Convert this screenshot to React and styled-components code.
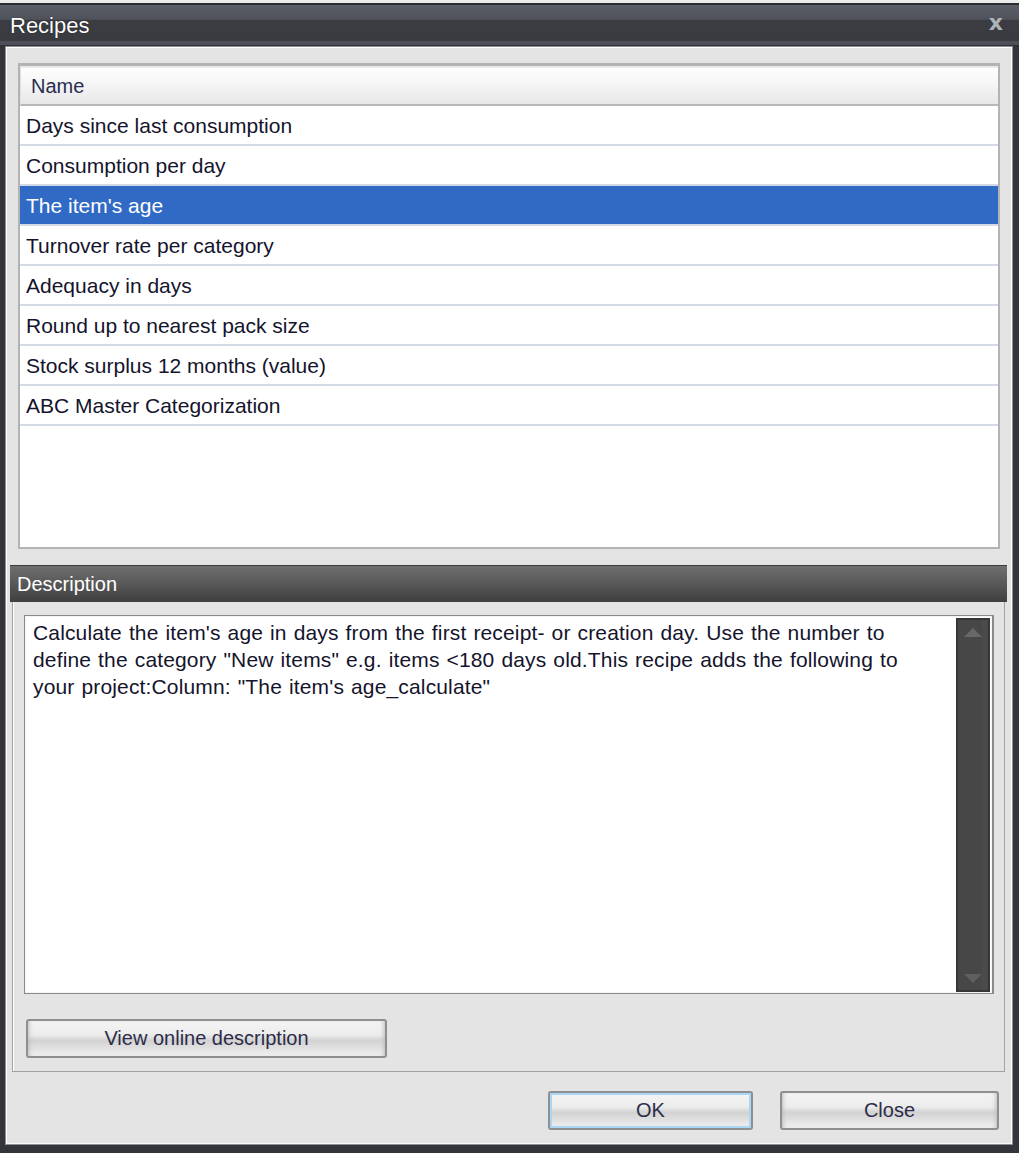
import styled, { createGlobalStyle } from 'styled-components';

const GlobalStyle = createGlobalStyle`
  html, body {
    margin: 0;
    padding: 0;
    background: #ebebeb;
  }
  body {
    font-family: "Liberation Sans", Arial, sans-serif;
  }
`;

const recipes = [
  'Days since last consumption',
  'Consumption per day',
  "The item's age",
  'Turnover rate per category',
  'Adequacy in days',
  'Round up to nearest pack size',
  'Stock surplus 12 months (value)',
  'ABC Master Categorization',
];

// the dialog wraps the description at these points
const descLines = [
  "Calculate the item's age in days from the first receipt- or creation day. Use the number to",
  'define the category "New items" e.g. items <180 days old.This recipe adds the following to',
  'your project:Column: "The item\'s age_calculate"',
];

const Window = styled.div`
  margin-top: 3px;
  width: 1019px;
  height: 1150px;
  box-sizing: border-box;
  background: #33353a;
  display: flex;
  flex-direction: column;
  padding: 0 7px 9px 6px;
`;

const TitleBar = styled.div`
  height: 44px;
  margin: 0 -7px 0 -6px;
  box-sizing: border-box;
  border-top: 2px solid #2a2b30;
  border-bottom: 2px solid #2e3034;
  background: linear-gradient(
    to bottom,
    #5b5e67 0%,
    #4f525a 36%,
    #3b3d43 37%,
    #393b41 90%,
    #4c4f57 91%,
    #4c4f57 100%
  );
  display: flex;
  align-items: center;
  justify-content: space-between;
  padding: 0 16px 0 10px;
`;

const Title = styled.span`
  color: #fff;
  font-size: 22px;
  text-shadow: 0 0 1px #000;
  margin-top: 2px;
`;

const CloseX = styled.span`
  color: #aeb3ba;
  font-size: 22px;
  font-weight: 700;
  margin-top: -6px;
  font-family: "DejaVu Sans", sans-serif;
`;

const Content = styled.div`
  flex: 1;
  background: #e4e4e4;
  box-shadow: inset 1px 1px 0 #fff, inset -1px -1px 0 #fafafa, 0 0 0 1px #8e9096;
  display: flex;
  flex-direction: column;
  padding: 16px 5px 0 4px;
`;

const ListBox = styled.div`
  height: 486px;
  box-sizing: border-box;
  margin: 0 7px 0 8px;
  border: 2px solid #b3b3b3;
  border-top-width: 3px;
  box-shadow: inset 0 2px 0 #e9e9e9;
  padding-top: 2px;
  background: #fff;
  display: flex;
  flex-direction: column;
  overflow: hidden;
`;

const Header = styled.div`
  height: 38px;
  box-sizing: border-box;
  flex-shrink: 0;
  background: linear-gradient(to bottom, #fefefe 0%, #f4f4f4 50%, #e7e7e7 100%);
  border-bottom: 2px solid #b8b8b8;
  border-left: 1px solid #e0e0e0;
  display: flex;
  align-items: center;
  padding-left: 10px;
  font-size: 20px;
  color: #2a2d50;
`;

const Row = styled.div`
  height: 40px;
  box-sizing: border-box;
  flex-shrink: 0;
  border-bottom: 2px solid #d3dae5;
  display: flex;
  align-items: center;
  padding-left: 6px;
  padding-top: 1px;
  font-size: 21px;
  background: ${(p) => (p.$selected ? '#316ac5' : '#fff')};
  color: ${(p) => (p.$selected ? '#fff' : '#14142c')};
`;

const DescHeader = styled.div`
  margin-top: 16px;
  height: 37px;
  box-sizing: border-box;
  border-top: 1px solid #3c3c3c;
  background: linear-gradient(to bottom, #6f6f6f 0%, #5a5a5a 45%, #3f3f3f 100%);
  display: flex;
  align-items: center;
  padding-left: 7px;
  color: #fff;
  font-size: 20px;
`;

const DescBody = styled.div`
  margin: 0 2px;
  height: 470px;
  box-sizing: border-box;
  border: 1px solid #a2a2a2;
  border-top: none;
  box-shadow: inset 1px 0 0 #fff;
  padding: 13px 10px 0 11px;
  display: flex;
  flex-direction: column;
`;

const TextBox = styled.div`
  height: 379px;
  box-sizing: border-box;
  border: 1px solid #8a8a8a;
  border-right-width: 2px;
  box-shadow: inset 0 0 0 1px #f4f4f4;
  background: #fff;
  display: flex;
`;

const DescText = styled.div`
  flex: 1;
  min-width: 0;
  padding: 3px 8px 0 8px;
  font-size: 21px;
  line-height: 27px;
  letter-spacing: 0.15px;
  word-spacing: 1px;
  color: #14142c;
  white-space: nowrap;
  overflow: hidden;
`;

const Scrollbar = styled.div`
  width: 34px;
  flex-shrink: 0;
  margin: 2px 2px 1px 0;
  box-sizing: border-box;
  background: #474747;
  border: 2px solid #363636;
  box-shadow: inset -6px 0 0 #4b4b4b;
  display: flex;
  flex-direction: column;
  justify-content: space-between;
  align-items: center;
  padding: 8px 0 7px;
`;

const Arrow = styled.span`
  width: 0;
  height: 0;
  border-left: 9px solid transparent;
  border-right: 9px solid transparent;
  ${(p) =>
    p.$down ? 'border-top: 9px solid #5f5f5f;' : 'border-bottom: 9px solid #686868;'}
`;

const Button = styled.button`
  width: ${(p) => p.$width}px;
  height: 39px;
  box-sizing: border-box;
  border: 2px solid #8f8f8f;
  border-radius: 3px;
  background: linear-gradient(
    to bottom,
    #f4f4f4 0%,
    #ececec 40%,
    #d2d2d2 55%,
    #e2e2e2 80%,
    #f0f0f0 100%
  );
  box-shadow: ${(p) =>
    p.$focused ? 'inset 0 0 0 2px #a9d7f5' : 'inset 4px 0 4px -3px #bbb, inset -4px 0 4px -3px #bbb'};
  font-family: "Liberation Sans", Arial, sans-serif;
  font-size: 20px;
  color: #2c2c4a;
  padding: 0;
  cursor: pointer;
`;

const OnlineButton = styled(Button)`
  margin: 25px 0 0 2px;
`;

const Footer = styled.div`
  display: flex;
  justify-content: flex-end;
  gap: 27px;
  margin-top: 19px;
  padding-right: 8px;
`;

export default function App() {
  return (
    <>
      <GlobalStyle />
      <Window>
        <TitleBar>
          <Title>Recipes</Title>
          <CloseX>x</CloseX>
        </TitleBar>
        <Content>
          <ListBox>
            <Header>Name</Header>
            {recipes.map((name) => (
              <Row key={name} $selected={name === "The item's age"}>
                {name}
              </Row>
            ))}
          </ListBox>
          <DescHeader>Description</DescHeader>
          <DescBody>
            <TextBox>
              <DescText>
                {descLines.map((line) => (
                  <div key={line}>{line}</div>
                ))}
              </DescText>
              <Scrollbar>
                <Arrow />
                <Arrow $down />
              </Scrollbar>
            </TextBox>
            <OnlineButton $width={361}>View online description</OnlineButton>
          </DescBody>
          <Footer>
            <Button $width={205} $focused>
              OK
            </Button>
            <Button $width={219}>Close</Button>
          </Footer>
        </Content>
      </Window>
    </>
  );
}
